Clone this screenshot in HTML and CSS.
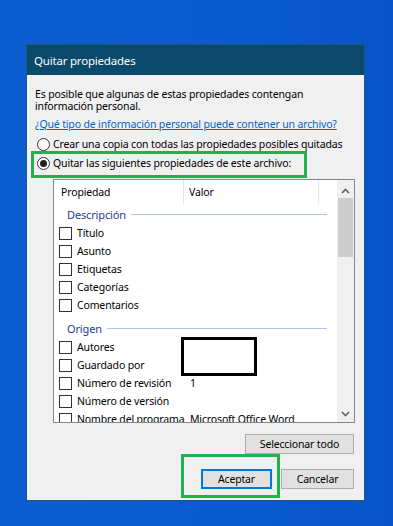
FILE: index.html
```html
<!DOCTYPE html>
<html lang="es">
<head>
<meta charset="utf-8">
<title>Quitar propiedades</title>
<link rel="stylesheet" href="styles.css">
</head>
<body>
<div class="dialog">
  <div class="titlebar">Quitar propiedades</div>
  <div class="content">
    <p class="intro">Es posible que algunas de estas propiedades contengan<br>información personal.</p>
    <a class="link" href="#">¿Qué tipo de información personal puede contener un archivo?</a>
    <div class="radio-row r1"><span class="radio"></span><span class="radio-label">Crear una copia con todas las propiedades posibles quitadas</span></div>
    <div class="radio-row r2"><span class="radio checked"></span><span class="radio-label">Quitar las siguientes propiedades de este archivo:</span></div>
    <div class="list">
      <div class="view">
        <div class="header">
          <div class="col c1">Propiedad</div>
          <div class="col c2">Valor</div>
          <div class="col c3"></div>
        </div>
        <div class="group"><span class="group-title">Descripción</span><span class="group-line"></span></div>
        <div class="item"><span class="cell"><span class="check"></span>Título</span><span class="value"></span></div>
        <div class="item"><span class="cell"><span class="check"></span>Asunto</span><span class="value"></span></div>
        <div class="item"><span class="cell"><span class="check"></span>Etiquetas</span><span class="value"></span></div>
        <div class="item"><span class="cell"><span class="check"></span>Categorías</span><span class="value"></span></div>
        <div class="item"><span class="cell"><span class="check"></span>Comentarios</span><span class="value"></span></div>
        <div class="group next"><span class="group-title">Origen</span><span class="group-line"></span></div>
        <div class="item"><span class="cell"><span class="check"></span>Autores</span><span class="value"></span></div>
        <div class="item"><span class="cell"><span class="check"></span>Guardado por</span><span class="value"></span></div>
        <div class="item"><span class="cell"><span class="check"></span>Número de revisión</span><span class="value">1</span></div>
        <div class="item"><span class="cell"><span class="check"></span>Número de versión</span><span class="value"></span></div>
        <div class="item"><span class="cell"><span class="check"></span>Nombre del programa</span><span class="value">Microsoft Office Word</span></div>
        <div class="redact"></div>
      </div>
      <div class="scrollbar">
        <div class="arrow up"><svg width="9" height="6" viewBox="0 0 9 6"><polyline points="1,5 4.5,1.5 8,5" fill="none" stroke="#606060" stroke-width="1.6"/></svg></div>
        <div class="track"><div class="thumb"></div></div>
        <div class="arrow down"><svg width="9" height="6" viewBox="0 0 9 6"><polyline points="1,1 4.5,4.5 8,1" fill="none" stroke="#606060" stroke-width="1.6"/></svg></div>
      </div>
    </div>
    <div class="select-row"><button class="btn btn-select">Seleccionar todo</button></div>
    <div class="actions">
      <button class="btn btn-ok">Aceptar</button>
      <button class="btn btn-cancel">Cancelar</button>
    </div>
  </div>
  <div class="mark mark-radio"></div>
  <div class="mark mark-ok"></div>
</div>
</body>
</html>
```
FILE: styles.css
```css
html, body {
  margin: 0;
  padding: 0;
}
body {
  width: 393px;
  height: 526px;
  overflow: hidden;
  background: linear-gradient(90deg, #0c5dcf 0%, #0b5bd0 55%, #0853c9 100%);
  font-family: "Noto Sans", "Liberation Sans", sans-serif;
  font-size: 10.5px;
  letter-spacing: -0.15px;
  color: #000;
  padding-top: 44px;
  box-sizing: border-box;
}
.dialog {
  position: relative;
  width: 339px;
  margin-left: 26px;
  background: #f0f0f0;
  border: 1px solid #1d5878;
  box-sizing: border-box;
}
.titlebar {
  height: 30px;
  background: #0b4a6b;
  color: #fff;
  font-size: 11.5px;
  letter-spacing: -0.2px;
  display: flex;
  align-items: center;
  padding-left: 7px;
}
.content {
  padding: 13px 10px 11px 8px;
  display: flex;
  flex-direction: column;
}
.intro {
  margin: 0;
  line-height: 12px;
}
.link {
  display: block;
  margin-top: 6px;
  line-height: 12px;
  color: #0066cc;
  text-decoration: underline;
  white-space: nowrap;
}
.radio-row {
  display: flex;
  align-items: center;
  height: 16px;
  padding-left: 2px;
  gap: 3px;
  white-space: nowrap;
}
.r1 { margin-top: 6px; }
.r2 { margin-top: 3px; }
.radio {
  width: 13px;
  height: 13px;
  box-sizing: border-box;
  border: 1px solid #333;
  border-radius: 50%;
  background: #fff;
  flex: none;
  display: flex;
  align-items: center;
  justify-content: center;
}
.radio.checked::after {
  content: "";
  width: 7px;
  height: 7px;
  border-radius: 50%;
  background: #222;
}
.list {
  margin-top: 8px;
  margin-left: 18px;
  width: 302px;
  height: 244px;
  box-sizing: border-box;
  border: 1px solid #828790;
  background: #fff;
  display: flex;
}
.view {
  position: relative;
  flex: 1;
  overflow: hidden;
}
.header {
  display: flex;
  height: 24px;
}
.col {
  display: flex;
  align-items: center;
  box-sizing: border-box;
  height: 24px;
}
.c1 {
  width: 130px;
  padding-left: 7px;
  border-right: 1px solid #e5e5e5;
}
.c2 {
  width: 135px;
  padding-left: 5px;
  border-right: 1px solid #e5e5e5;
}
.c3 { flex: 1; }
.group {
  display: flex;
  align-items: center;
  height: 20px;
  padding-left: 13px;
  padding-right: 10px;
}
.group.next { margin-top: 4px; }
.group-title {
  color: #1e3c9c;
  font-size: 11px;
}
.group-line {
  flex: 1;
  height: 1px;
  margin-left: 5px;
  background: #b2c3e6;
}
.item {
  display: grid;
  grid-template-columns: 130px 1fr;
  height: 18px;
  align-items: center;
  white-space: nowrap;
}
.cell {
  display: flex;
  align-items: center;
  padding-left: 5px;
  gap: 5px;
}
.check {
  width: 13px;
  height: 13px;
  box-sizing: border-box;
  border: 1px solid #333;
  background: #fff;
  flex: none;
}
.value {
  padding-left: 6px;
}
.redact {
  position: absolute;
  left: 127px;
  top: 157px;
  width: 76px;
  height: 39px;
  box-sizing: border-box;
  border: 3px solid #000;
  background: #fff;
}
.scrollbar {
  width: 17px;
  background: #f0f0f0;
  display: flex;
  flex-direction: column;
}
.arrow {
  height: 17px;
  display: flex;
  align-items: center;
  justify-content: center;
}
.arrow.up { padding-top: 4px; box-sizing: border-box; }
.track {
  flex: 1;
  padding: 1px 1px 0;
}
.thumb {
  height: 59px;
  background: #cdcdcd;
}
.select-row {
  display: flex;
  justify-content: flex-end;
  margin-top: 11px;
}
.actions {
  display: flex;
  justify-content: flex-end;
  gap: 9px;
  margin-top: 15px;
}
.btn {
  font-family: inherit;
  font-size: 10.5px;
  letter-spacing: -0.15px;
  color: #000;
  height: 20px;
  box-sizing: border-box;
  background: #e1e1e1;
  border: 1px solid #adadad;
  padding: 0;
  margin: 0;
}
.btn-select { width: 109px; }
.btn-ok {
  width: 71px;
  border: 2px solid #0078d7;
}
.btn-cancel { width: 73px; }
.mark {
  position: absolute;
  box-sizing: border-box;
  border: 3px solid #22b14c;
}
.mark-radio {
  left: 4px;
  top: 106px;
  width: 276px;
  height: 27px;
}
.mark-ok {
  left: 154px;
  top: 409px;
  width: 99px;
  height: 44px;
}
```
